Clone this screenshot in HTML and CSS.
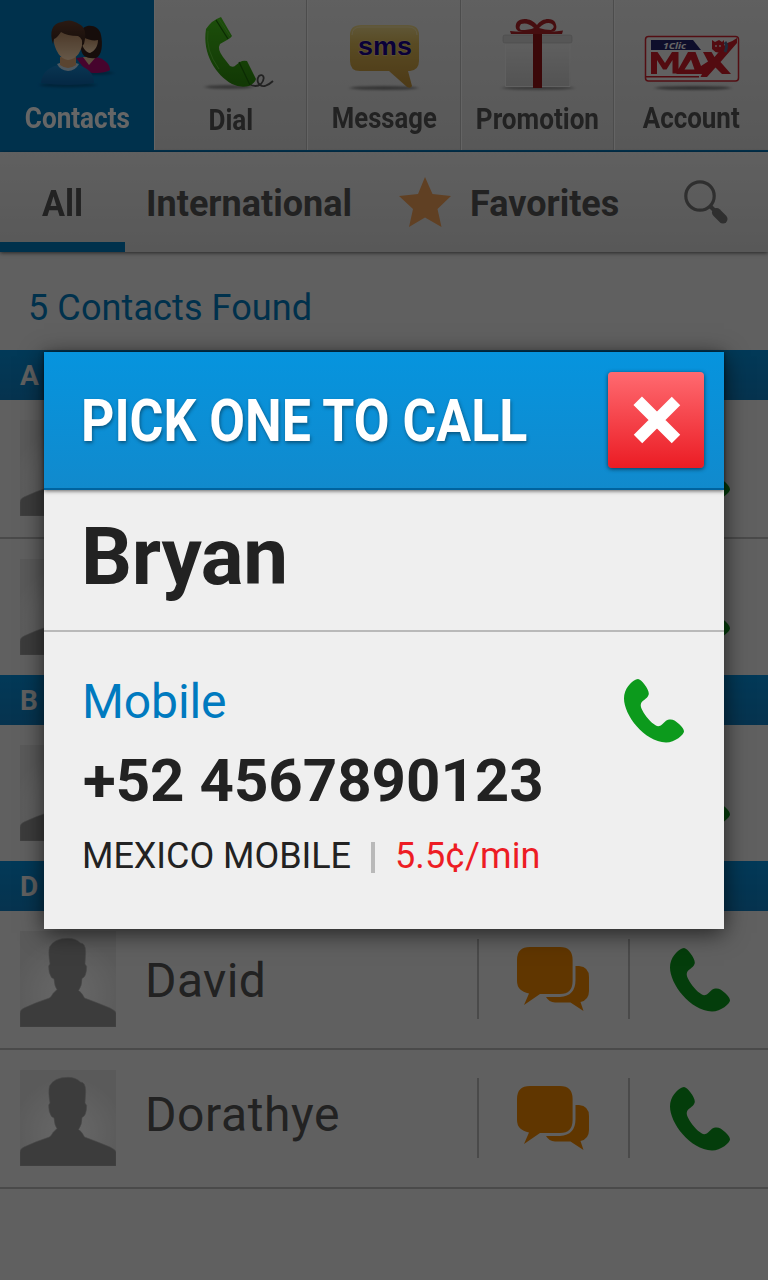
FILE: index.html
```
<!DOCTYPE html>
<html lang="en">
<head>
<meta charset="utf-8">
<title>Contacts</title>
<link rel="stylesheet" href="styles.css">
</head>
<body>
<svg class="defs" width="0" height="0">
  <defs>
    <linearGradient id="blue" x2="0" y2="1"><stop stop-color="#1886cc"/><stop offset="1" stop-color="#0c64aa"/></linearGradient>
    <linearGradient id="skin" x2="0" y2="1"><stop stop-color="#b98a62"/><stop offset="1" stop-color="#ffdcb4"/></linearGradient>
    <linearGradient id="hair" x2="0" y2="1"><stop stop-color="#6a4230"/><stop offset="1" stop-color="#38221a"/></linearGradient>
    <linearGradient id="green" x2="0" y2="1"><stop stop-color="#48c41c"/><stop offset="1" stop-color="#2c8c0c"/></linearGradient>
    <linearGradient id="yellow" x2="0" y2="1"><stop stop-color="#efda8c"/><stop offset=".3" stop-color="#deba58"/><stop offset="1" stop-color="#c09038"/></linearGradient>
    <linearGradient id="box" x2="0" y2="1"><stop stop-color="#efefef"/><stop offset="1" stop-color="#cfcfcf"/></linearGradient>
    <radialGradient id="glow" cy=".65" r=".6"><stop stop-color="#ffffff"/><stop offset=".35" stop-color="#f8f8f8"/><stop offset="1" stop-color="#e0e0e0"/></radialGradient>
    <filter id="soft" x="-20%" y="-100%" width="140%" height="300%"><feGaussianBlur stdDeviation="2 1"/></filter>
    <symbol id="phone" viewBox="0 0 60 64"><path d="M14 0C17 0 24.800 9.500 24.800 14.600C24.800 18 21 20.300 18.500 22.300C15.800 25 16.700 28 18.200 31C21.500 37.500 27 43.500 31.500 46.300C34 47.800 36 47.300 38 45.500L42 41.800C44 40.300 48 40 50.500 41.500C54 43.700 60 49 60 52.500C60 55.500 51 63.500 42 63.500C20 62.500 0 36 0 19.500C0 10 7 2.500 12 .5Q13 0 14 0Z"/></symbol>
    <symbol id="chat" viewBox="0 0 72 64"><path d="M13 0H43Q55.600 0 55.600 13V34Q55.600 47 43 47H23L7 58L12 46.500Q0 44 0 34V13Q0 0 13 0Z"/><path d="M58.500 19H62Q72 20 72 30V44Q72 53 63.500 55L66.500 64L53.500 55.500H38Q32 55 29 50H43Q58.500 49 58.500 33Z"/></symbol>
    <symbol id="person" viewBox="0 0 96 96"><path fill="url(#glow)" d="M0 0H96V96H0Z"/><path fill="#979797" stroke="#b4b4b4" stroke-width=".6" d="M0 96V82Q0 79 4 77Q17 71 29.500 67Q31.500 65.500 33 62.500L37 58.500Q34.500 55.500 34 48L31.500 46.500Q28.500 42 28.700 35L30 33Q28 22 29.500 16Q34 7.300 48 7.300Q56 7.300 60.500 12Q65.500 12 65.700 21L65 33L66.700 35.500Q66.500 46 62 47.500Q62 55 58.500 59.500Q61.500 61 64.500 67Q78 72 90 77Q96 80 96 82V96Z"/></symbol>
  </defs>
</svg>

<div class="app">
  <nav class="nav">
    <a class="nav-item active">
      <svg viewBox="0 0 154 100" width="154" height="100">
        <ellipse cx="68" cy="85" rx="28" ry="2.500" fill="#005a90" filter="url(#soft)"/>
        <ellipse cx="98" cy="73" rx="15" ry="2" fill="#005a90" filter="url(#soft)"/>
        <path fill="#b00c72" d="M76 58C82 57 87 57 95 57C104 58 110 64 110 70C106 73 94 74 87 72Z"/>
        <path fill="#ecc49c" d="M83 57L89 65L96 57Z"/>
        <path fill="#38221c" d="M81 33C82 23 99 23 101 35C103 44 102 56 96 58C88 59 82 57 81 49Z"/>
        <path fill="url(#skin)" d="M83 37C88 40 94 41 98 40C98 46 95 51 90 53C85 52 82 46 82 43Z"/>
        <path fill="url(#blue)" d="M41 83C42 73 47 68 58 65H78C88 68 94 73 94 83Q68 87 41 83Z"/>
        <path fill="#c4dcee" d="M57 64Q67 59 79 64Q75 71 68 71Q60 70 57 64Z"/>
        <path fill="#e2aa78" d="M60 57H76V65Q68 71 60 65Z"/>
        <path fill="url(#skin)" d="M53 38Q54 30 68 30Q82 30 83 38Q82 58 68 60Q56 58 53 38Z"/>
        <path fill="url(#hair)" d="M53 44C49 32 52 23 62 22Q70 18 79 24Q88 28 84 44L82 46Q83 38 78 36Q67 36 61 32Q57 38 54 39Z"/>
      </svg>
      <span class="nav-label contacts">Contacts</span>
    </a>
    <a class="nav-item">
      <svg viewBox="154 0 154 100" width="154" height="100">
        <ellipse cx="229" cy="87" rx="24" ry="2" fill="#8a8a8a" filter="url(#soft)"/>
        <path fill="none" stroke="#555" stroke-width="1.800" d="M249 84Q256 88 261 84C266 78 263 73 259 76C256 80 258 87 265 86Q270 84 273 81"/>
        <path fill="url(#green)" d="M206 29Q212 20 221 17L232 36Q231 38 227 40L220 44Q217 49 223 57L230 66Q234 68 236 65L240 62Q243 60 247 61L256 79Q255 83 249 86Q240 88 232 84C216 75 202 54 206 29Z"/>
        <path fill="none" stroke="#1c6c08" stroke-width="1.300" d="M216 20L228 39M239 62L250 85"/>
        <path fill="none" stroke="#60c838" stroke-width="1" d="M208 31Q205 50 219 69M219 19L230 36"/>
      </svg>
      <span class="nav-label dial">Dial</span>
    </a>
    <a class="nav-item">
      <svg viewBox="307 0 154 100" width="154" height="100">
        <ellipse cx="384" cy="88" rx="34" ry="2" fill="#858585" filter="url(#soft)"/>
        <path fill="url(#yellow)" d="M361 25H408Q419 25 419 35V61Q419 70 410 71H408L412 86Q411 89 407 87L389 71H360Q350 71 350 61V35Q350 25 361 25Z"/>
        <path fill="none" stroke="#f2e2a8" d="M352 35Q352 27 361 27H408Q417 27 417 35"/>
        <text class="sms-text" x="358" y="55" textLength="54" lengthAdjust="spacingAndGlyphs">sms</text>
      </svg>
      <span class="nav-label message">Message</span>
    </a>
    <a class="nav-item">
      <svg viewBox="461 0 154 100" width="154" height="100">
        <ellipse cx="538" cy="88" rx="36" ry="2" fill="#959595" filter="url(#soft)"/>
        <path fill="url(#box)" d="M505 41H571V87H505Z"/>
        <path fill="none" stroke="#f0f0f0" d="M505.500 43V86.500H570V43"/>
        <rect x="503" y="35" width="69" height="8" rx="2" fill="#d6d6d6" stroke="#bababa" stroke-width=".6"/>
        <path fill="#941418" d="M533 33H542V88H533Z"/>
        <path fill="#b02428" d="M510 31Q524 33 536 30Q550 33 563 30.500L562 34H511Z"/>
        <path fill="#b02428" fill-rule="evenodd" d="M537 25C541 18 552 17 555 22C558 28 556 32 551 32H523C516 32 514 27 517 22C521 17 532 18 537 25ZM521 30Q529 30 534 28Q528 22 521 24Q518 28 521 30ZM551 30Q556 27 552 24Q546 21 539 28Q545 30 551 30Z"/>
      </svg>
      <span class="nav-label promotion">Promotion</span>
    </a>
    <a class="nav-item">
      <svg viewBox="614 0 154 100" width="154" height="100">
        <ellipse cx="692" cy="88" rx="38" ry="2" fill="#7c7c7c" filter="url(#soft)"/>
        <rect x="644.500" y="36.500" width="93" height="44.500" rx="3" fill="#f2f2f2" stroke="#cf2430" stroke-width="1.500"/>
        <path fill="#24246c" d="M650 40H692L700 50H650Z"/>
        <text class="clic-text" x="662" y="48.800" textLength="23" lengthAdjust="spacingAndGlyphs">1Clic</text>
        <path fill="#d01c28" d="M650 74V52H656.500L664 63L671 52H677.500V69L687 52H694.500L700 66L707 61.500L702 52H710.500L713.500 57L725 43.500Q731 42 736 38V43L719.500 62L730 74H721L714.500 67.500L706 77H699.500L701 74H675.500V73.500H671.500V60L665.500 69.500H662L656 60V74ZM683.500 69.500H693.500L690 59.500ZM645 76H698V77.500H645Z"/>
        <path fill="#d01c28" d="M711 43V40L714 42L718 40L721 42L723 40V49Q717 56 711 49Z"/>
        <path stroke="#f2f2f2" stroke-width="1.300" d="M715 45V47M719 45V47"/>
        <path fill="none" stroke="#506b91" stroke-width="3" d="M724 42Q727 46 724 52"/>
      </svg>
      <span class="nav-label account">Account</span>
    </a>
  </nav>

  <div class="tabs">
    <a class="tab tab-all"><span>All</span></a>
    <a class="tab tab-intl">International</a>
    <a class="tab tab-fav">
      <svg viewBox="0 0 52 50" width="52" height="50"><path fill="#f0a058" d="M26 0L33.500 17L52 19L38.500 32L42.500 50L26 40.500L10 50L14 32L0 19L19 17Z"/></svg>
      <span>Favorites</span>
    </a>
    <svg class="search" viewBox="0 0 44 44" width="44" height="44"><circle cx="16" cy="16" r="14.200" fill="none" stroke="#757575" stroke-width="3.200"/><path stroke="#757575" stroke-width="4" d="M26 26L31 31"/><path stroke="#757575" stroke-width="9" stroke-linecap="round" d="M32.500 32.500L39 39"/></svg>
  </div>

  <div class="count">5 Contacts Found</div>

  <h2 class="section">A</h2>
  <div class="row ruled">
    <svg class="avatar"><use href="#person"/></svg><span class="name"></span>
    <span class="action"><svg class="chat"><use href="#chat"/></svg></span>
    <span class="action"><svg class="phone"><use href="#phone"/></svg></span>
  </div>
  <div class="row">
    <svg class="avatar"><use href="#person"/></svg><span class="name"></span>
    <span class="action"><svg class="chat"><use href="#chat"/></svg></span>
    <span class="action"><svg class="phone"><use href="#phone"/></svg></span>
  </div>
  <h2 class="section">B</h2>
  <div class="row">
    <svg class="avatar"><use href="#person"/></svg><span class="name"></span>
    <span class="action"><svg class="chat"><use href="#chat"/></svg></span>
    <span class="action"><svg class="phone"><use href="#phone"/></svg></span>
  </div>
  <h2 class="section">D</h2>
  <div class="row ruled">
    <svg class="avatar"><use href="#person"/></svg><span class="name david">David</span>
    <span class="action"><svg class="chat"><use href="#chat"/></svg></span>
    <span class="action"><svg class="phone"><use href="#phone"/></svg></span>
  </div>
  <div class="row ruled">
    <svg class="avatar"><use href="#person"/></svg><span class="name dorathye">Dorathye</span>
    <span class="action"><svg class="chat"><use href="#chat"/></svg></span>
    <span class="action"><svg class="phone"><use href="#phone"/></svg></span>
  </div>
</div>

<div class="overlay">
  <div class="modal">
    <header class="modal-head">
      <h1 class="modal-title">PICK ONE TO CALL</h1>
      <button class="close" aria-label="Close"><svg viewBox="0 0 48 48" width="48" height="48"><path stroke="#fff" stroke-width="12" d="M4.700 4.700L43 43M43 5L5 43"/></svg></button>
    </header>
    <div class="person-name">Bryan</div>
    <div class="details">
      <div class="numbers">
        <div class="kind">Mobile</div>
        <div class="number">+52 4567890123</div>
        <div class="rate"><span>MEXICO MOBILE</span><i class="bar"></i><span class="price">5.5¢/min</span></div>
      </div>
      <svg class="phone call"><use href="#phone"/></svg>
    </div>
  </div>
</div>
</body>
</html>
```
FILE: styles.css
```
* { box-sizing: border-box; }
body {
  margin: 0;
  width: 768px;
  height: 1280px;
  overflow: hidden;
  background: #efefef;
  color: #555;
  font-family: Roboto, sans-serif;
}
svg { display: block; flex: none; }
.defs { position: absolute; }
h1, h2 { margin: 0; }

.nav {
  display: grid;
  grid-template-columns: 154px 153px 154px 153px 154px;
  height: 152px;
  border-bottom: 2px solid #007abf;
  background: linear-gradient(#efefef, #dcdcdc);
}
.nav-item {
  display: flex;
  flex-direction: column;
  align-items: center;
  border-left: 1px solid #fafafa;
  border-right: 1px solid #bdbdbd;
}
.nav-item:last-child { border-right: 0; }
.nav-item.active {
  background: #007abf;
  color: #fff;
  border: 0;
}
.nav-label {
  font-size: 29px;
  font-weight: 700;
  line-height: 36px;
  transform: scaleX(.9);
}
.nav-label.dial { padding-top: 2px; }
.nav-label.message { transform: scaleX(.885); }
.nav-label.promotion { padding-top: 1px; }
.nav-label.account { transform: scaleX(.895); }
.sms-text { font: 700 25px "Liberation Sans", sans-serif; fill: #1a008c; stroke: #e8d89c; stroke-width: 1px; paint-order: stroke; }
.clic-text { font: italic 700 9.500px "Open Sans", sans-serif; fill: #fff; }

.tabs {
  display: flex;
  align-items: center;
  height: 100px;
  background: linear-gradient(#efefef, #dcdcdc);
  box-shadow: 0 1px 4px rgba(0, 0, 0, .6);
  font-size: 36px;
  font-weight: 700;
}
.tab {
  display: flex;
  align-items: center;
  height: 100px;
  padding-top: 3px;
}
.tab-all {
  width: 125px;
  padding: 13px 0 0 42px;
  border-bottom: 10px solid #007abf;
}
.tab-all span { transform: scaleX(.95); transform-origin: 0 50%; }
.tab-intl { width: 274px; padding-left: 21px; }
.tab-fav { width: 285px; gap: 19px; }
.tab-fav svg { margin-top: -3px; }

.count {
  height: 98px;
  padding: 13px 28px 0;
  line-height: 86px;
  font-size: 36px;
  letter-spacing: .1px;
  color: #007abf;
}
.section {
  height: 50px;
  padding: 1px 20px 0;
  line-height: 50px;
  font-size: 28px;
  color: #efefef;
  background: linear-gradient(#0690dc, #1080c4);
}
.row {
  display: flex;
  height: 136px;
  padding: 20px 0;
}
.row.ruled { height: 139px; border-bottom: 2px solid #b9b9b9; }
.avatar { width: 96px; height: 96px; margin-left: 20px; }
.name {
  flex: 1;
  margin-left: 29px;
  line-height: 96px;
  font-size: 48px;
}
.david { padding-top: 2px; letter-spacing: .4px; }
.dorathye { margin-top: -3px; letter-spacing: .6px; }
.action {
  display: flex;
  justify-content: center;
  align-items: center;
  width: 151px;
  height: 80px;
  margin-top: 8px;
  padding-right: 2px;
  border-left: 2px solid #b9b9b9;
}
.action:last-child { width: 140px; padding: 1px 0 0 2px; }
.chat { width: 72px; height: 64px; fill: #f08800; }
.phone { width: 60px; height: 64px; fill: #0c9a1c; }

.overlay {
  position: absolute;
  inset: 0;
  display: flex;
  justify-content: center;
  align-items: flex-start;
  padding-top: 352px;
  background: rgba(0, 0, 0, .6);
}
.modal {
  width: 680px;
  height: 577px;
  background: #efefef;
  color: #222;
  box-shadow: 0 4px 22px rgba(0, 0, 0, .65);
}
.modal-head {
  display: flex;
  justify-content: space-between;
  height: 138px;
  padding: 20px 20px 0 37px;
  border-bottom: 2px solid #00639f;
  background: linear-gradient(#0694de, #118acd);
  box-shadow: 0 1px 4px rgba(0, 0, 0, .6);
}
.modal-title {
  width: 0;
  white-space: nowrap;
  line-height: 98px;
  font-size: 60px;
  color: #fff;
  text-shadow: 1px 2px 4px rgba(0, 0, 0, .4);
  transform: scaleX(.864);
  transform-origin: 0 50%;
}
.close {
  display: grid;
  place-items: center;
  width: 96px;
  height: 96px;
  padding: 0 0 1px 1px;
  border: 0;
  border-radius: 4px;
  background: linear-gradient(#ff6a70, #eb1c24);
  box-shadow: 0 1px 4px rgba(0, 0, 0, .6);
}
.person-name {
  height: 142px;
  padding-left: 37px;
  line-height: 134px;
  font-size: 80px;
  font-weight: 700;
  letter-spacing: -.3px;
  border-bottom: 2px solid #b9b9b9;
}
.details {
  display: flex;
  justify-content: space-between;
  padding: 40px 40px 0 38px;
}
.kind { line-height: 60px; font-size: 48px; letter-spacing: -.1px; color: #007abf; }
.number { margin-top: 9px; padding-left: 1px; line-height: 80px; font-size: 60px; font-weight: 700; }
.rate {
  display: flex;
  align-items: center;
  margin-top: 13px;
  line-height: 44px;
  font-size: 36px;
  letter-spacing: -.05px;
}
.bar { width: 4px; height: 31px; margin: 2px 20px 0; background: #b9b9b9; }
.price { color: #ed1c24; letter-spacing: .1px; }
.call { margin-top: 7px; }
```
